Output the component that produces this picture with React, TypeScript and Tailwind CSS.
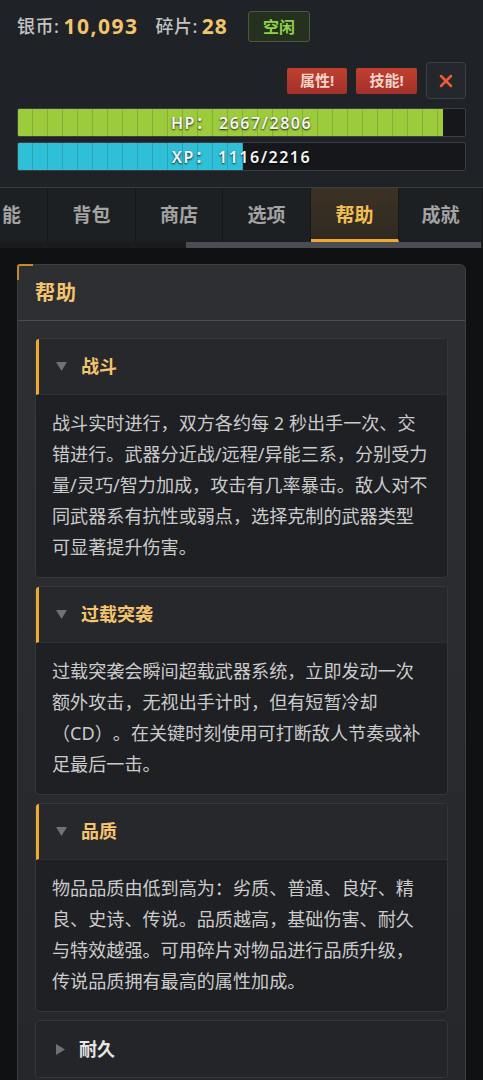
import { X } from 'lucide-react'

const font = 'font-["Noto_Sans","Noto_Sans_CJK_SC",sans-serif]'

type Section = { title: string; open: boolean; text?: string }

const sections: Section[] = [
  {
    title: '战斗',
    open: true,
    text: '战斗实时进行，双方各约每 2 秒出手一次、交错进行。武器分近战/远程/异能三系，分别受力量/灵巧/智力加成，攻击有几率暴击。敌人对不同武器系有抗性或弱点，选择克制的武器类型可显著提升伤害。'
  },
  {
    title: '过载突袭',
    open: true,
    text: '过载突袭会瞬间超载武器系统，立即发动一次额外攻击，无视出手计时，但有短暂冷却（CD）。在关键时刻使用可打断敌人节奏或补足最后一击。'
  },
  {
    title: '品质',
    open: true,
    text: '物品品质由低到高为：劣质、普通、良好、精良、史诗、传说。品质越高，基础伤害、耐久与特效越强。可用碎片对物品进行品质升级，传说品质拥有最高的属性加成。'
  },
  { title: '耐久', open: false }
]

const tabs = [
  { label: '能', w: 'w-[48px]', justify: 'justify-start pl-[2px]' },
  { label: '背包', w: 'w-[88px]' },
  { label: '商店', w: 'w-[87px]' },
  { label: '选项', w: 'w-[88px]' },
  { label: '帮助', w: 'w-[88px]', active: true },
  { label: '成就', w: 'w-[84px]' }
]

function Bar({ label, value, max, fill }: { label: string; value: number; max: number; fill: string }) {
  const pct = (value / max) * 100
  return (
    <div className="relative h-[29px] overflow-hidden rounded-[2px] border border-[#3b3e43] bg-[#15171a]">
      <div
        className={`h-full ${fill} bg-[repeating-linear-gradient(90deg,transparent_0_14px,rgba(0,0,0,0.14)_14px_15px)]`}
        style={{ width: `${pct}%` }}
      />
      <div className="absolute inset-0 flex items-center justify-center text-[16px] font-semibold tracking-[1.5px] text-[#f4f4f4] [text-shadow:0_1px_2px_rgba(0,0,0,0.85)]">
        {label}：&nbsp;{value}/{max}
      </div>
    </div>
  )
}

function Triangle({ open }: { open: boolean }) {
  return open ? (
    <svg width="11" height="9" viewBox="0 0 11 9" className="shrink-0">
      <path d="M0 0H11L5.5 9Z" fill="#6f7275" />
    </svg>
  ) : (
    <svg width="9" height="11" viewBox="0 0 9 11" className="shrink-0">
      <path d="M0 0V11L9 5.5Z" fill="#6f7275" />
    </svg>
  )
}

function HelpSection({ s }: { s: Section }) {
  return (
    <div className="overflow-hidden rounded-[4px] border border-[#34373b] bg-[#1e2023]">
      <div
        className={`flex h-[56px] items-center gap-[14px] ${
          s.open
            ? 'border-b border-l-[3px] border-b-[#2c2f33] border-l-[#f0a92e] bg-[#26282c] pl-[17px]'
            : 'bg-[#232528] pl-[20px]'
        }`}
      >
        <Triangle open={s.open} />
        <span className={`text-[18px] font-bold ${s.open ? 'text-[#f5c46e]' : 'text-[#e6e6e6]'}`}>{s.title}</span>
      </div>
      {s.open && (
        <p className="px-[16px] pt-[13px] pb-[14px] text-[18.1px] leading-[31px] text-[#cbcbcb] [text-spacing-trim:space-all]">
          {s.text}
        </p>
      )}
    </div>
  )
}

export default function App() {
  return (
    <div className={`h-[1080px] w-[483px] overflow-hidden bg-[#101113] ${font}`}>
      <header className="bg-[#1f2226] px-[17px] pt-[11px] pb-[16px]">
        <div className="flex h-[31px] items-center">
          <span className="text-[18px] font-medium tracking-[0.5px] text-[#c4c4c4]">银币:</span>
          <span className="ml-[4px] text-[21px] font-bold tracking-[1.5px] text-[#f2c46d]">10,093</span>
          <span className="ml-[17px] text-[18px] font-medium tracking-[0.5px] text-[#c4c4c4]">碎片:</span>
          <span className="ml-[4px] text-[21px] font-bold tracking-[1px] text-[#f2c46d]">28</span>
          <span className="ml-[20px] flex h-[31px] w-[62px] items-center justify-center rounded-[3px] border border-[#4b5a3c] bg-[#25301f] text-[16px] font-bold text-[#8fd14a]">
            空闲
          </span>
        </div>
        <div className="mt-[20px] flex h-[37px] items-center justify-end gap-[9px]">
          <button className="flex h-[26px] w-[60px] items-center justify-center rounded-[2px] bg-[linear-gradient(#c0402f,#a3302a)] text-[15px] font-bold text-[#f3d2c8]">
            属性!
          </button>
          <button className="flex h-[26px] w-[61px] items-center justify-center rounded-[2px] bg-[linear-gradient(#c0402f,#a3302a)] text-[15px] font-bold text-[#f3d2c8]">
            技能!
          </button>
          <button className="flex h-[37px] w-[40px] items-center justify-center rounded-[4px] border border-[#3d4147] bg-[#24272b] text-[#ef5a3a]">
            <X size={20} strokeWidth={3} />
          </button>
        </div>
        <div className="mt-[9px]">
          <Bar label="HP" value={2667} max={2806} fill="bg-[#9ccb3c]" />
        </div>
        <div className="mt-[5px]">
          <Bar label="XP" value={1116} max={2216} fill="bg-[#2fbfd6]" />
        </div>
      </header>

      <nav className="border-t border-[#3a3d41] bg-[#1a1c1f]">
        <div className="flex h-[54px]">
          {tabs.map((t) => (
            <div
              key={t.label}
              className={`flex shrink-0 items-center border-r border-[#15171a] text-[19px] font-bold ${t.w} ${
                t.justify ?? 'justify-center'
              } ${
                t.active
                  ? 'border-b-[3px] border-b-[#f0a92e] bg-[linear-gradient(#3d3224,#2f2a22)] pt-[3px] text-[#f2be52]'
                  : 'bg-[#1d2023] text-[#a3a3a3]'
              }`}
            >
              {t.label}
            </div>
          ))}
        </div>
        <div className="flex h-[6px] bg-[#191b1e]">
          <div className="w-[186px]" />
          <div className="w-[295px] bg-[#4a4d52]" />
        </div>
      </nav>

      <main className="px-[17px] pt-[16px]">
        <section className="relative rounded-[6px] border border-[#3b3e43] bg-[linear-gradient(#2d2f33,#25272a)]">
          <div className="absolute -top-px -left-px h-[16px] w-[16px] rounded-tl-[3px] border-t-2 border-l-2 border-[#c48a2c]" />
          <div className="flex h-[56px] items-center border-b border-[#4a4d52] px-[17px]">
            <h2 className="text-[20px] font-bold tracking-[1px] text-[#f5c46e]">帮助</h2>
          </div>
          <div className="flex flex-col gap-[8px] px-[17px] pt-[17px] pb-[20px]">
            {sections.map((s) => (
              <HelpSection key={s.title} s={s} />
            ))}
          </div>
        </section>
      </main>
    </div>
  )
}
